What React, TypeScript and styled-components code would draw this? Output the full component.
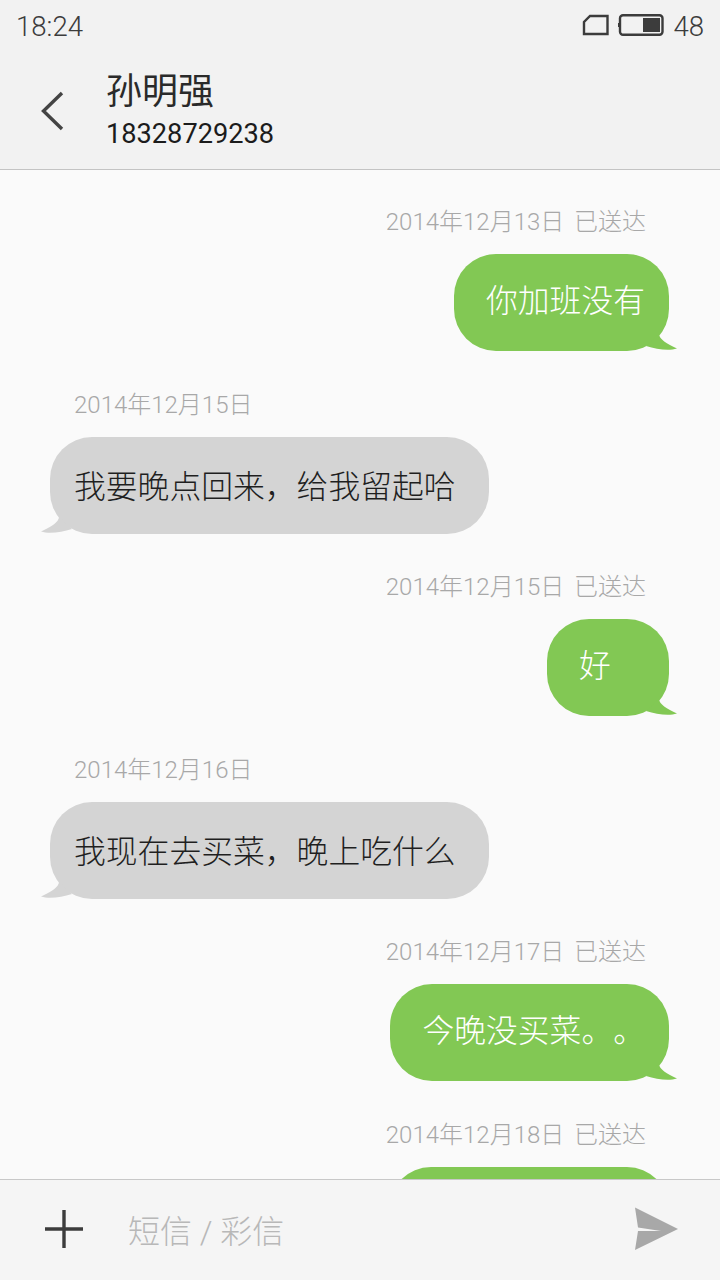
import styled, { createGlobalStyle } from "styled-components";

const GlobalStyle = createGlobalStyle`
  html, body {
    margin: 0;
    padding: 0;
    background: #fafafa;
  }
`;

const Page = styled.div`
  width: 720px;
  height: 1280px;
  display: flex;
  flex-direction: column;
  overflow: hidden;
  background: #fafafa;
  font-family: Roboto, "Noto Sans CJK SC", sans-serif;
  font-kerning: none;
  text-spacing-trim: space-all;
`;

const Top = styled.header`
  height: 169px;
  flex: none;
  background: #f2f2f2;
  border-bottom: 1px solid #c4c4c4;
`;

const StatusBar = styled.div`
  height: 52px;
  padding: 0 16px;
  display: flex;
  align-items: center;
  justify-content: space-between;
  font-size: 27.6px;
  font-weight: 300;
  color: #3c3c3c;
`;

const StatusIcons = styled.div`
  display: flex;
  align-items: center;
  gap: 9px;
`;

const StatusGlyph = styled.svg`
  height: 22px;
  margin-bottom: 2px;
`;

const TitleBar = styled.div`
  display: flex;
  align-items: center;
  padding: 17px 0 0 40px;
`;

const BackIcon = styled.svg`
  width: 26px;
  height: 40px;
  margin-right: 40px;
`;

const Name = styled.div`
  font-size: 36px;
  line-height: 46px;
  color: #2a2a2a;
`;

const Phone = styled.div`
  font-size: 27.2px;
  line-height: 38px;
  color: #1c1c1c;
`;

const Conversation = styled.main`
  flex: 1;
  min-height: 0;
  overflow: hidden;
  padding-top: 36px;
`;

const Message = styled.section<{ $sent?: boolean }>`
  display: flex;
  flex-direction: column;
  align-items: ${(p) => (p.$sent ? "flex-end" : "flex-start")};
  height: 182.5px;
  padding: ${(p) => (p.$sent ? "0 51px 0 0" : "0 0 0 50px")};
`;

const DateLine = styled.div<{ $sent?: boolean }>`
  height: 32px;
  line-height: 32px;
  margin: ${(p) => (p.$sent ? "0 23px 16px 0" : "0 0 16px 24px")};
  font-size: 24px;
  font-weight: 300;
  word-spacing: -1px;
  color: #a8a8a8;
  white-space: pre;
`;

const Bubble = styled.div<{ $sent?: boolean; $width?: number }>`
  position: relative;
  box-sizing: border-box;
  height: 97px;
  min-width: ${(p) => p.$width ?? 122}px;
  padding: ${(p) => (p.$sent ? "0 24px 0 32px" : "0 33px 0 24px")};
  border-radius: 42px;
  background: ${(p) => (p.$sent ? "#82c854" : "#d4d4d4")};
  color: ${(p) => (p.$sent ? "#ffffff" : "#1f1f1f")};
  font-size: 31.8px;
  font-weight: 300;
  line-height: ${(p) => (p.$sent ? 95 : 101)}px;
  white-space: nowrap;
`;

const Tail = styled.svg<{ $sent?: boolean }>`
  position: absolute;
  bottom: 0;
  width: 32px;
  height: 18px;
  ${(p) => (p.$sent ? "right: -8px;" : "left: -9px; transform: scaleX(-1);")}
`;

const Composer = styled.footer`
  height: 101px;
  flex: none;
  box-sizing: border-box;
  background: #f5f5f5;
  border-top: 1px solid #c8c8c8;
  display: flex;
  align-items: center;
  padding: 0 42px 2px 44px;
  position: relative;
  z-index: 1;
`;

const PlusIcon = styled.svg`
  width: 40px;
  height: 40px;
  margin-right: 44px;
`;

const Placeholder = styled.div`
  flex: 1;
  font-size: 32px;
  font-weight: 300;
  color: #b8b8b8;
`;

const SendIcon = styled.svg`
  width: 44px;
  height: 44px;
`;

const messages = [
  { sent: true, date: "2014年12月13日  已送达", text: "你加班没有" },
  { sent: false, date: "2014年12月15日", text: "我要晚点回来\uff0c给我留起哈" },
  { sent: true, date: "2014年12月15日  已送达", text: "好" },
  { sent: false, date: "2014年12月16日", text: "我现在去买菜\uff0c晚上吃什么" },
  { sent: true, date: "2014年12月17日  已送达", text: "今晚没买菜。。" },
  // only the top of this bubble shows above the composer
  { sent: true, date: "2014年12月18日  已送达", text: "", width: 280 },
];

const App = () => {
  return (
    <Page>
      <GlobalStyle />
      <Top>
        <StatusBar>
          <span>18:24</span>
          <StatusIcons>
            <StatusGlyph width="27" viewBox="0 0 27 22">
              <path d="M8 2 H25.5 V20 H2 V8 Z" fill="none" stroke="#3c3c3c" strokeWidth="2.4" />
            </StatusGlyph>
            <StatusGlyph width="46" viewBox="0 0 46 22">
              <rect x="2" y="1.2" width="42.5" height="19.6" rx="3" fill="none" stroke="#3c3c3c" strokeWidth="2.4" />
              <rect x="0" y="9" width="2" height="4" fill="#3c3c3c" />
              <rect x="25" y="4" width="17" height="14" fill="#3c3c3c" />
            </StatusGlyph>
            <span>48</span>
          </StatusIcons>
        </StatusBar>
        <TitleBar>
          <BackIcon viewBox="0 0 26 40">
            <path d="M22 2 L3.5 20 L22 38" fill="none" stroke="#444444" strokeWidth="3.4" />
          </BackIcon>
          <div>
            <Name>孙明强</Name>
            <Phone>18328729238</Phone>
          </div>
        </TitleBar>
      </Top>
      <Conversation>
        {messages.map((m, i) => (
          <Message key={i} $sent={m.sent}>
            <DateLine $sent={m.sent}>{m.date}</DateLine>
            <Bubble $sent={m.sent} $width={m.width}>
              {m.text}
              <Tail $sent={m.sent} viewBox="0 0 32 18" fill={m.sent ? "#82c854" : "#d4d4d4"}>
                <path d="M14 1 C14 6 22 11 32 15.5 C24 18 12 16.5 1 13 Z" />
              </Tail>
            </Bubble>
          </Message>
        ))}
      </Conversation>
      <Composer>
        <PlusIcon viewBox="0 0 40 40">
          <path d="M1 20 H39 M20 1 V39" fill="none" stroke="#3c3c3c" strokeWidth="3.4" />
        </PlusIcon>
        <Placeholder>短信 / 彩信</Placeholder>
        <SendIcon viewBox="0 0 44 44">
          <path d="M1 0.5 L44 22 L1 43 L4 24 H27 L4 20.5 Z" fill="#a8a8a8" />
        </SendIcon>
      </Composer>
    </Page>
  );
};

export default App;
